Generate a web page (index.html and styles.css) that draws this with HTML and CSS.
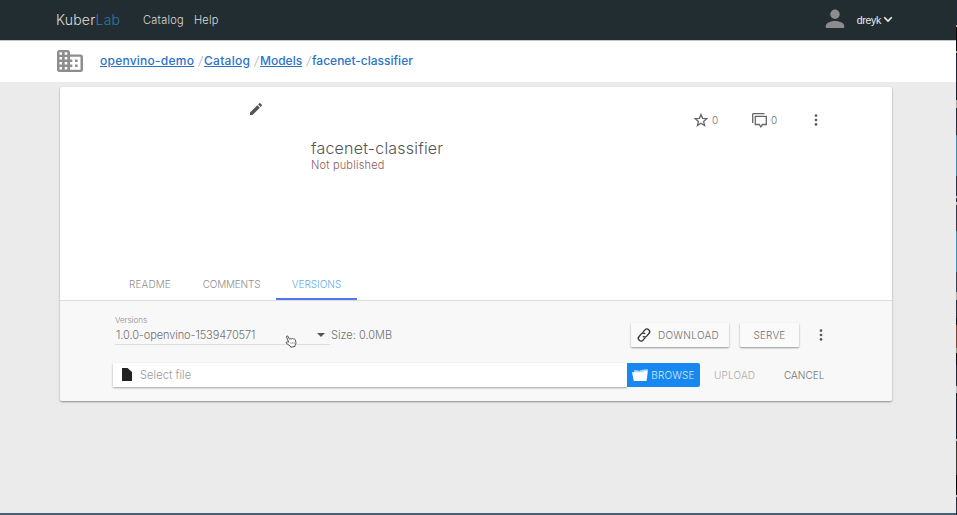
FILE: index.html
```html
<!DOCTYPE html>
<html lang="en">
<head>
<meta charset="utf-8">
<title>KuberLab</title>
<link rel="stylesheet" href="styles.css">
</head>
<body>
<div class="page">
  <header class="topbar">
    <div class="brand">Kuber<span>Lab</span></div>
    <nav class="nav"><a class="nav-catalog">Catalog</a><a class="nav-help">Help</a></nav>
    <div class="user">
      <svg class="avatar" width="20" height="20" viewBox="0 0 20 20"><circle cx="10" cy="5.3" r="4.7"/><path d="M.8 19v-2.2C.8 13.6 6.5 12 10 12s9.2 1.600 9.200 4.800V19z"/></svg>
      <span class="user-name">dreyk</span>
      <svg class="chevron" width="10" height="7" viewBox="0 0 10 7"><path d="M1.200 1.300 5 5.100 8.800 1.300"/></svg>
    </div>
  </header>
  <div class="crumbs">
    <svg class="org" width="26" height="24" viewBox="0 0 26 24"><path fill-rule="evenodd" d="M2.500 1H10.500Q13 1 13 3.500V5.500H23.500Q26 5.500 26 8V20.500Q26 23 23.500 23H2.500Q0 23 0 20.500V3.500Q0 1 2.500 1ZM2.500 3.200V5.700H5V3.200ZM7.700 3.200V5.700H10.300V3.200ZM2.500 8V10.500H5V8ZM7.700 8V10.500H10.300V8ZM2.500 13V15.500H5V13ZM7.700 13V15.500H10.300V13ZM2.500 18V20.500H5V18ZM7.700 18V20.500H10.300V18ZM13 7.800V10.500H15.300V13H13V15.500H15.300V18H13V20.700H23.500V7.800ZM18 10.500H20.600V13H18ZM18 15.500H20.600V18H18Z"/></svg>
    <a class="crumb c1">openvino-demo</a><i>/</i><a class="crumb c2">Catalog</a><i>/</i><a class="crumb c3">Models</a><i>/</i><span class="crumb c4">facenet-classifier</span>
  </div>
  <main class="card">
    <section class="summary">
      <svg class="pencil" width="12" height="12" viewBox="3 3 18 18"><path d="M3 17.250V21h3.750L17.800 9.940l-3.750-3.750L3 17.250zM20.700 7.040a1 1 0 0 0 0-1.410l-2.340-2.340a1 1 0 0 0-1.410 0l-1.830 1.830 3.750 3.750 1.830-1.830z"/></svg>
      <div class="names"><h1>facenet-classifier</h1><p>Not published</p></div>
      <div class="stats">
        <svg class="star" width="14" height="14" viewBox="1 1 22 22"><path d="M12 3.200 14.500 9.300 21.300 9.800 16.100 14.200 17.700 20.700 12 17.200 6.300 20.700 7.900 14.200 2.700 9.800 9.500 9.300Z"/></svg>
        <span>0</span>
        <svg class="chat" width="15" height="15" viewBox="0 0 15 15"><path d="M.7 10V1.400Q.7.7 1.400.7H12.500M3.300 3.300H14.300V11.500H10.500L8.800 13.800 7.200 11.500H3.300Z"/></svg>
        <span>0</span>
        <svg class="dots" width="4" height="12" viewBox="0 0 4 12"><circle cx="2" cy="1.600" r="1.300"/><circle cx="2" cy="6" r="1.300"/><circle cx="2" cy="10.400" r="1.300"/></svg>
      </div>
    </section>
    <div class="tabs"><div class="tab t1"><span>README</span></div><div class="tab t2"><span>COMMENTS</span></div><div class="tab t3 active"><span>VERSIONS</span></div></div>
    <section class="panel">
      <div class="row version-row">
        <div class="select">
          <label>Versions</label>
          <div class="value"><span>1.0.0-openvino-1539470571</span><b class="caret"></b></div>
          <svg class="cursor" width="12" height="13" viewBox="0 0 12 13"><path d="M3.700 7.200 1.500 1.900Q1.400.7 2.600.9L4.700 4.300Q5.500 3.200 6.500 3.900 7.500 3.100 8.400 4 9.700 3.500 10.300 4.700L10.900 7.500Q11.200 9 10 10V11.500L5.800 12.200 5 10.800 1.200 8.200Q.8 6.900 2.200 6.800Z"/><path class="knuckles" d="M6 7v2M7.700 7v2M9.200 7v2"/></svg>
        </div>
        <div class="size">Size: 0.0MB</div>
        <button class="btn download"><svg width="14" height="14" viewBox="0 0 14 14"><g transform="rotate(-48 7 7)"><path d="M6.200 9.700H2.600A2.700 2.700 0 0 1 2.600 4.300H6A2.700 2.700 0 0 1 8.700 7"/><path d="M7.800 4.300H11.400A2.700 2.700 0 0 1 11.400 9.700H8A2.700 2.700 0 0 1 5.300 7"/></g></svg><span>DOWNLOAD</span></button>
        <button class="btn serve"><span>SERVE</span></button>
        <svg class="dots" width="4" height="12" viewBox="0 0 4 12"><circle cx="2" cy="1.600" r="1.300"/><circle cx="2" cy="6" r="1.300"/><circle cx="2" cy="10.400" r="1.300"/></svg>
      </div>
      <div class="row file-row">
        <div class="file"><svg width="10" height="13" viewBox="0 0 10 13"><path d="M0 0H5.500L10 4V13H0Z"/></svg><span>Select file</span></div>
        <button class="browse"><svg width="17" height="12" viewBox="0 0 17 12"><path class="back" d="M2 2.500V1.200H6L7 2.200 9 1 14.500.2 16 .5 15 10H3Z"/><path d="M0 3.300H11.200L12.200 2H15.500L14.500 12H1.800Z"/></svg><span>BROWSE</span></button>
        <span class="upload">UPLOAD</span>
        <span class="cancel">CANCEL</span>
      </div>
    </section>
  </main>
</div>
<div class="edge"></div>
</body>
</html>
```
FILE: styles.css
```css
* { box-sizing: border-box; }
body { margin: 0; width: 957px; height: 515px; display: flex; overflow: hidden; font-family: Inter, "Open Sans", sans-serif; font-weight: 300; color: #707070; background: #ebebeb; }
svg { flex: none; display: block; }
button { border: 0; padding: 0; font: inherit; color: inherit; }
.page { width: 956px; height: 515px; border-bottom: 2px solid #466271; }
.edge { width: 1px; height: 515px; background: linear-gradient(#202c38 0 25px, #aaa 25px 27px, #050505 27px 51px, #aaa 51px 53px, #17202f 53px 100px, #aaa 100px 108px, #202c38 108px 135px, #4389a9 135px 176px, #263442 176px 196px, #bbb 196px 198px, #263442 198px 202px, #bbb 202px 205px, #303944 205px 231px, #4291b2 231px 272px, #344252 272px 292px, #aaa 292px 300px, #273142 300px 318px, #111 318px 325px, #79452f 325px 348px, #96917e 348px 353px, #080b10 353px 365px, #202a3a 365px 386px, #bbb 386px 393px, #151e2c 393px 439px, #bbb 439px 441px, #38372f 441px 475px, #050505 475px 495px, #bbb 495px 497px, #26323a 497px); }
.topbar { height: 41px; display: flex; align-items: center; background: #222d31; border-bottom: 1px solid #b9c9ca; color: #ddd; padding: 0 64px 1px 56px; }
.brand { width: 87px; font-size: 14px; letter-spacing: .2px; white-space: nowrap; }
.brand span { color: #277cad; }
.nav { display: flex; gap: 10px; font-size: 11px; letter-spacing: .25px; padding-top: 1px; }
.user { margin: 0 -1px 0 auto; display: flex; align-items: center; }
.avatar { fill: #8c8c8c; margin-right: 12px; margin-top: -1px; }
.user-name { font: 10.5px "Liberation Sans", sans-serif; letter-spacing: -.3px; color: #eee; margin-right: 2px; }
.chevron { fill: none; stroke: #eee; stroke-width: 1.6; }
.crumbs { height: 41px; padding: 0 0 2px 57px; background: #fff; display: flex; align-items: center; font-size: 12px; color: #2b72c9; }
.org { fill: #8d8d8d; margin: 1px 17px 0 0; }
.crumb { font-weight: 500; white-space: nowrap; }
.c1 { width: 94px; letter-spacing: .24px; }
.c2 { width: 46px; letter-spacing: .27px; }
.c3 { width: 42px; }
a.crumb { text-decoration: underline; text-underline-offset: 1px; }
.crumbs i { width: 10px; text-align: center; color: #aaa; padding-left: 3px; }
.card { width: 832px; height: 314px; margin: 5px 0 0 60px; background: #fff; border-radius: 2px; box-shadow: 0 1px 2px rgba(0,0,0,.4); }
.summary { height: 182px; display: flex; align-items: flex-start; }
.pencil { fill: #555; margin: 16px 0 0 190px; }
.names { width: 384px; margin: 52px 0 0 49px; }
h1 { font-size: 16px; font-weight: 300; line-height: 18px; letter-spacing: .2px; margin: 0; color: #555; }
p { margin: 0; font-size: 11px; line-height: 16px; letter-spacing: .17px; color: #945858; }
.stats { display: flex; align-items: center; margin: 25px 0 0 -1px; height: 16px; font-size: 10px; }
.star, .chat { fill: none; stroke: #666; stroke-width: 1.3; }
.star { stroke-width: 2; }
.stats span { width: 8px; margin-left: 3px; text-align: center; }
.chat { margin-left: 33px; margin-top: 1px; }
.dots { fill: #555; }
.stats .dots { margin-left: 36px; }
.tabs { height: 32px; padding-left: 49px; display: flex; border-bottom: 1px solid #ddd; font-size: 10px; color: #8e8e8e; }
.tab { height: 31px; display: flex; justify-content: center; align-items: center; padding-bottom: 2px; }
.t1 { width: 82px; letter-spacing: .1px; }
.t2 { width: 81px; margin-right: 4px; letter-spacing: -.2px; }
.t3 { width: 81px; }
.active { color: #64aeea; border-bottom: 2px solid #5078e8; padding: 0; }
.panel { height: 100px; background: #f8f8f8; border-radius: 0 0 2px 2px; }
.row { display: flex; align-items: center; }
.version-row { height: 48px; padding: 13px 0 0 55px; align-items: flex-start; }
.select { width: 215px; height: 31px; border-bottom: 1px solid #ddd; position: relative; white-space: nowrap; }
label { display: block; height: 12px; line-height: 12px; font-size: 8px; color: #888; }
.value { height: 18px; display: flex; justify-content: space-between; align-items: center; font-size: 11px; letter-spacing: -.09px; padding: 0 5px 0 1px; }
.caret { border: 4px solid transparent; border-top-color: #555; border-bottom: 0; }
.cursor { position: absolute; left: 170px; top: 21px; fill: #fff; stroke: #555; stroke-width: 1; }
.knuckles { stroke: #888; stroke-width: .7; }
.size { width: 300px; margin: 12px 0 0 1px; line-height: 18px; font-size: 11px; }
.btn { height: 24px; margin-top: 9px; display: flex; align-items: center; justify-content: center; font-size: 10px; background: #fafafa; border-radius: 1px; box-shadow: 0 1px 2px rgba(0,0,0,.4); }
.download { width: 98px; padding-right: 4px; gap: 7px; letter-spacing: .3px; }
.download svg { fill: none; stroke: #333; stroke-width: 1.3; overflow: visible; }
.serve { width: 59px; margin-left: 11px; letter-spacing: .15px; }
.version-row .dots { margin: 15px 0 0 20px; }
.file-row { height: 51px; padding-left: 53px; font-size: 10px; }
.file { width: 514px; height: 24px; display: flex; align-items: center; padding-left: 9px; gap: 8px; background: #fff; box-shadow: 0 1px 2px rgba(0,0,0,.35); color: #999; font-size: 11px; letter-spacing: .1px; }
.file svg { fill: #222; }
.browse { width: 73px; height: 24px; display: flex; align-items: center; justify-content: center; gap: 2px; background: #1688f0; color: #d5ebff; border-radius: 0 2px 2px 0; letter-spacing: .15px; }
.browse svg { fill: #fff; }
.browse .back { fill: #a9d7ff; }
.upload { margin-left: 14px; width: 70px; color: #aaa; letter-spacing: .15px; }
```
